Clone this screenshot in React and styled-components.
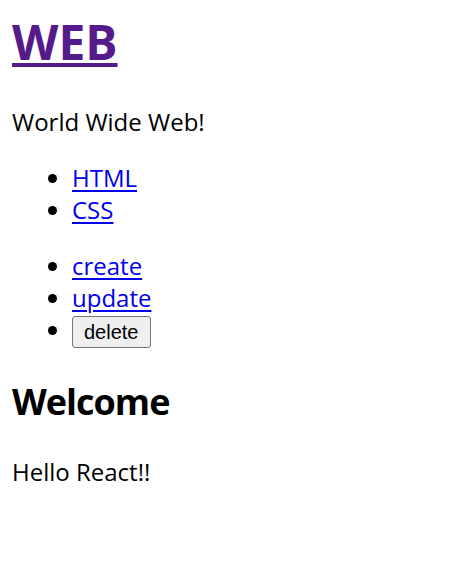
import React from 'react'
import styled, { createGlobalStyle } from 'styled-components'

const GlobalStyle = createGlobalStyle`
  body {
    margin: 0;
    padding: 10px 12px;
    background: #fff;
    color: #000;
    font-family: "Open Sans", "Noto Sans CJK KR", sans-serif;
    font-size: 24px;
    line-height: 32px;
  }
`

const Title = styled.h1`
  margin: 0 0 32px;
  font-size: 48px;
  line-height: 64px;
  font-weight: 700;
`

const TitleLink = styled.a`
  color: #551a8b;
  text-decoration: underline;
  text-decoration-thickness: 4px;
  text-underline-offset: 3px;
`

const Desc = styled.p`
  margin: 24px 0;
`

const List = styled.ul`
  margin: 24px 0;
  padding-left: 60px;
`

const Item = styled.li`
  line-height: 32px;
`

const NavLink = styled.a`
  color: #0000ee;
  text-decoration: underline;
  text-decoration-thickness: 2px;
  text-underline-offset: 3px;
`

const Button = styled.button`
  box-sizing: border-box;
  height: 32px;
  padding: 0 11px;
  border: 1px solid #767676;
  border-radius: 3px;
  background: #efefef;
  color: #000;
  font-family: "Liberation Sans", Arial, sans-serif;
  font-size: 20px;
  line-height: 28px;
  vertical-align: baseline;
`

const Heading = styled.h2`
  margin: 30px 0;
  font-size: 36px;
  line-height: 48px;
  font-weight: 700;
  letter-spacing: -1px;
`

const Body = styled.p`
  margin: 24px 0;
`

const topics = [
  { id: 1, title: 'HTML' },
  { id: 2, title: 'CSS' },
]

export default function App() {
  return (
    <>
      <GlobalStyle />
      <header>
        <Title>
          <TitleLink href="/">WEB</TitleLink>
        </Title>
      </header>
      <Desc>World Wide Web!</Desc>
      <nav>
        <List>
          {topics.map((t) => (
            <Item key={t.id}>
              <NavLink href={'/content/' + t.id}>{t.title}</NavLink>
            </Item>
          ))}
        </List>
      </nav>
      <List>
        <Item><NavLink href="/create">create</NavLink></Item>
        <Item><NavLink href="/update">update</NavLink></Item>
        <Item><Button type="button">delete</Button></Item>
      </List>
      <article>
        <Heading>Welcome</Heading>
        <Body>Hello React!!</Body>
      </article>
    </>
  )
}
